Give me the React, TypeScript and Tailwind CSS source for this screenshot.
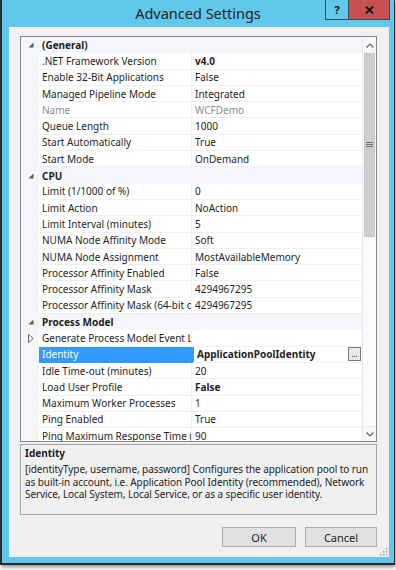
import React from "react";

type Row =
  | { kind: "cat"; label: string }
  | {
      kind: "prop";
      name: string;
      value: string;
      bold?: boolean;
      disabled?: boolean;
      selected?: boolean;
      collapsed?: boolean;
      button?: boolean;
    };

const rows: Row[] = [
  { kind: "cat", label: "(General)" },
  { kind: "prop", name: ".NET Framework Version", value: "v4.0", bold: true },
  { kind: "prop", name: "Enable 32-Bit Applications", value: "False" },
  { kind: "prop", name: "Managed Pipeline Mode", value: "Integrated" },
  { kind: "prop", name: "Name", value: "WCFDemo", disabled: true },
  { kind: "prop", name: "Queue Length", value: "1000" },
  { kind: "prop", name: "Start Automatically", value: "True" },
  { kind: "prop", name: "Start Mode", value: "OnDemand" },
  { kind: "cat", label: "CPU" },
  { kind: "prop", name: "Limit (1/1000 of %)", value: "0" },
  { kind: "prop", name: "Limit Action", value: "NoAction" },
  { kind: "prop", name: "Limit Interval (minutes)", value: "5" },
  { kind: "prop", name: "NUMA Node Affinity Mode", value: "Soft" },
  { kind: "prop", name: "NUMA Node Assignment", value: "MostAvailableMemory" },
  { kind: "prop", name: "Processor Affinity Enabled", value: "False" },
  { kind: "prop", name: "Processor Affinity Mask", value: "4294967295" },
  { kind: "prop", name: "Processor Affinity Mask (64-bit option)", value: "4294967295" },
  { kind: "cat", label: "Process Model" },
  { kind: "prop", name: "Generate Process Model Event Log Entry", value: "", collapsed: true },
  { kind: "prop", name: "Identity", value: "ApplicationPoolIdentity", bold: true, selected: true, button: true },
  { kind: "prop", name: "Idle Time-out (minutes)", value: "20" },
  { kind: "prop", name: "Load User Profile", value: "False", bold: true },
  { kind: "prop", name: "Maximum Worker Processes", value: "1" },
  { kind: "prop", name: "Ping Enabled", value: "True" },
  { kind: "prop", name: "Ping Maximum Response Time (seconds)", value: "90" },
];

function ExpandedGlyph() {
  return (
    <svg width="6" height="6" viewBox="0 0 6 6">
      <polygon points="5.5,0.5 5.5,5.5 0.5,5.5" fill="#5a5a5a" />
    </svg>
  );
}

function CollapsedGlyph() {
  return (
    <svg width="6" height="9" viewBox="0 0 6 9">
      <polygon points="0.5,0.5 5.3,4.5 0.5,8.5" fill="none" stroke="#6a6a6a" strokeWidth="1" />
    </svg>
  );
}

function GridRow({ row }: { row: Row }) {
  if (row.kind === "cat") {
    return (
      <div className="flex h-[16.3px] shrink-0 items-center bg-[#f4f6f9]">
        <div className="flex w-[18px] shrink-0 items-center justify-center pl-[2px]">
          <ExpandedGlyph />
        </div>
        <div className="pl-[3px] font-bold text-[#1e1e1e]">{row.label}</div>
      </div>
    );
  }
  return (
    <div className="flex h-[16.3px] shrink-0">
      <div className="flex w-[18px] shrink-0 items-center justify-center bg-[#f4f6f9] pl-[2px]">
        {row.collapsed ? <CollapsedGlyph /> : null}
      </div>
      <div
        className={
          row.selected
            ? "flex w-[153px] shrink-0 items-center overflow-hidden whitespace-nowrap border-b border-r border-[#3399ff] bg-[#3399ff] pl-[3px] text-white"
            : "flex w-[153px] shrink-0 items-center overflow-hidden whitespace-nowrap border-b border-r border-[#f0f0f0] bg-white pl-[3px] " +
              (row.disabled ? "text-[#8e8e8e]" : "text-[#1e1e1e]")
        }
      >
        {row.name}
      </div>
      <div
        className={
          "flex min-w-0 flex-1 items-center justify-between overflow-hidden whitespace-nowrap border-b border-[#f0f0f0] bg-white pl-[3px] pr-[1px] " +
          (row.disabled ? "text-[#8e8e8e] " : "text-[#1e1e1e] ") +
          (row.bold ? "font-bold " : "") +
          (row.selected ? "border-l-2 border-l-[#3399ff] pl-[1px]" : "")
        }
      >
        <span>{row.value}</span>
        {row.button ? (
          <span className="flex h-[14px] w-[13px] items-end justify-center border border-[#7a7a7a] bg-[#e9e9e9] pb-[2px] text-[8px] font-normal leading-none text-[#222]">
            ...
          </span>
        ) : null}
      </div>
    </div>
  );
}

function ScrollBar() {
  return (
    <div className="flex w-[14px] shrink-0 flex-col border-l border-[#e6e6e6] bg-[#fbfbfb]">
      <div className="flex h-[16px] shrink-0 items-center justify-center bg-[#f7f7f7]">
        <svg width="8" height="5" viewBox="0 0 8 5">
          <polyline points="0.5,4.5 4,1 7.5,4.5" fill="none" stroke="#606060" strokeWidth="1.2" />
        </svg>
      </div>
      <div className="mx-[1px] flex h-[184px] shrink-0 items-center justify-center border border-[#c6c6c6] bg-[#cdcdcd]">
        <svg width="7" height="6" viewBox="0 0 7 6">
          <line x1="0" y1="0.5" x2="7" y2="0.5" stroke="#6e6e6e" strokeWidth="1" />
          <line x1="0" y1="2.5" x2="7" y2="2.5" stroke="#6e6e6e" strokeWidth="1" />
          <line x1="0" y1="4.5" x2="7" y2="4.5" stroke="#6e6e6e" strokeWidth="1" />
        </svg>
      </div>
      <div className="flex-1" />
      <div className="flex h-[15px] shrink-0 items-center justify-center border-t border-[#e6e6e6] bg-[#f7f7f7]">
        <svg width="8" height="5" viewBox="0 0 8 5">
          <polyline points="0.5,0.5 4,4 7.5,0.5" fill="none" stroke="#606060" strokeWidth="1.2" />
        </svg>
      </div>
    </div>
  );
}

export default function App() {
  return (
    <div className="h-[570px] w-[396px] overflow-hidden bg-white font-['Noto_Sans',sans-serif] text-[10px] leading-none">
      <div className="relative flex h-[565px] w-[395px] flex-col border-b-2 border-l-2 border-r border-[#2a2a2a] bg-[#62c8eb] pb-[6px] pl-[7px] pr-[5px] shadow-[1px_2px_4px_rgba(0,0,0,0.45)]">
        {/* title bar */}
        <div className="flex h-[27px] shrink-0 items-center justify-center pr-[2px] text-[14.5px] text-[#1e1e1e]">
          Advanced Settings
        </div>
        <div className="absolute right-[4px] top-0 flex h-[20px] border border-t-0 border-[#3a4a55]">
          <div className="flex w-[23px] items-center justify-center border-r border-[#3a4a55] bg-[#62c8eb] text-[11px] font-bold text-[#111]">
            ?
          </div>
          <div className="flex w-[40px] items-center justify-center bg-[#c75050]">
            <svg width="9" height="8" viewBox="0 0 9 8">
              <line x1="1" y1="0.5" x2="8" y2="7.5" stroke="#111" strokeWidth="1.8" />
              <line x1="8" y1="0.5" x2="1" y2="7.5" stroke="#111" strokeWidth="1.8" />
            </svg>
          </div>
        </div>

        {/* client area */}
        <div className="relative flex flex-1 flex-col bg-[#f0f0f0] pb-[10px] pl-[11px] pr-[12px] pt-[9px]">
          {/* property grid */}
          <div className="flex h-[406px] shrink-0 overflow-hidden border border-[#828790] bg-white">
            <div className="flex min-w-0 flex-1 flex-col overflow-hidden">
              {rows.map((r, i) => (
                <GridRow key={i} row={r} />
              ))}
            </div>
            <ScrollBar />
          </div>

          {/* description */}
          <div className="mt-[2px] flex h-[71px] shrink-0 flex-col border border-[#a6a6a6] bg-[#f0f0f0] pl-[4px] pt-[1px] text-[#1e1e1e]">
            <div className="h-[14px] font-bold leading-[14px]">Identity</div>
            <div className="mt-[3px] whitespace-nowrap leading-[12.5px] tracking-[-0.08px]">
              [identityType, username, password] Configures the application pool to run
              <br />
              as built-in account, i.e. Application Pool Identity (recommended), Network
              <br />
              Service, Local System, Local Service, or as a specific user identity.
            </div>
          </div>

          {/* buttons */}
          <div className="mt-[12px] flex h-[20px] shrink-0 justify-end gap-[9px]">
            <div className="flex w-[74px] items-center justify-center border border-[#adadad] bg-[#e1e1e1] text-[11px] text-[#1e1e1e]">
              OK
            </div>
            <div className="flex w-[72px] items-center justify-center border border-[#adadad] bg-[#e1e1e1] text-[11px] text-[#1e1e1e]">
              Cancel
            </div>
          </div>

          {/* resize grip */}
          <div className="absolute bottom-[1px] right-[1px]">
            <svg width="8" height="8" viewBox="0 0 8 8">
              <rect x="6" y="0" width="1.5" height="1.5" fill="#a0a0a0" />
              <rect x="3" y="3" width="1.5" height="1.5" fill="#a0a0a0" />
              <rect x="6" y="3" width="1.5" height="1.5" fill="#a0a0a0" />
              <rect x="0" y="6" width="1.5" height="1.5" fill="#a0a0a0" />
              <rect x="3" y="6" width="1.5" height="1.5" fill="#a0a0a0" />
              <rect x="6" y="6" width="1.5" height="1.5" fill="#a0a0a0" />
            </svg>
          </div>
        </div>
      </div>
    </div>
  );
}
